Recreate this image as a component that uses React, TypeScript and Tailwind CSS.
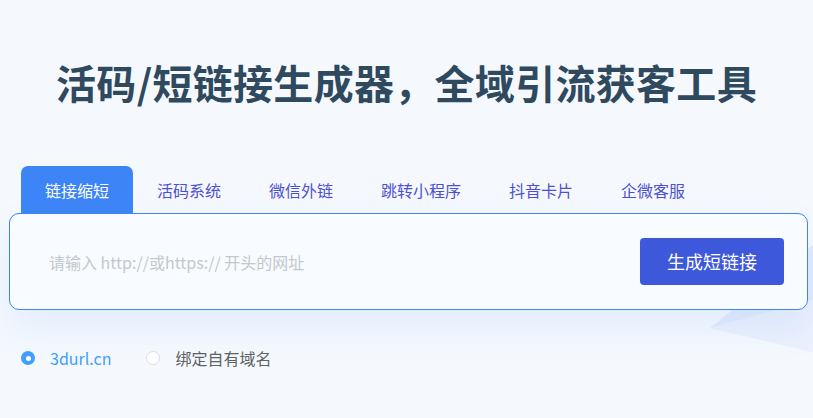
import React, { useState } from 'react';

const tabs = ['链接缩短', '活码系统', '微信外链', '跳转小程序', '抖音卡片', '企微客服'];

const App: React.FC = () => {
  const [active, setActive] = useState(0);
  const [domain, setDomain] = useState<'default' | 'own'>('default');

  return (
    <div
      className="relative w-[813px] h-[418px] overflow-hidden bg-[#f5f9fe]"
      style={{ fontFamily: '"Noto Sans CJK SC", "Noto Sans", sans-serif' }}
    >
      {/* decorative light shape, bottom right */}
      <svg className="absolute right-0 top-[240px] h-[120px] w-[103px]" viewBox="0 0 103 120" fill="none">
        <polygon points="0,88 103,5 103,112" fill="#e2ebfc" />
        <polygon points="0,88 103,60 103,112" fill="#ebf1fd" />
      </svg>

      <div className="relative flex flex-col">
        <h1 className="pt-[58px] text-center text-[40px] leading-[48px] font-bold text-[#2f4a5f] tracking-[0.3px]">
          活码/短链接生成器，全域引流获客工具
        </h1>

        <div className="mt-[60px] ml-[9px] mr-[5px]">
          <div className="flex pl-[12px]">
            {tabs.map((t, i) => (
              <button
                key={t}
                onClick={() => setActive(i)}
                className={`h-[48px] px-[24px] text-[16px] leading-[48px] rounded-t-[7px] ${
                  i === active ? 'bg-[#3d85f6] text-white' : 'text-[#4d50d6]'
                }`}
              >
                {t}
              </button>
            ))}
          </div>

          <div className="-mt-px flex h-[97px] items-center justify-between rounded-[10px] border border-[#3f86f5] bg-[#f8fbff] pl-[39px] pr-[23px] shadow-[0_18px_36px_rgba(64,128,240,0.10)]">
            <input
              className="flex-1 bg-transparent text-[16px] text-[#333] outline-none placeholder:text-[#c4c7cf]"
              placeholder="请输入 http://或https:// 开头的网址"
            />
            <button className="h-[47px] w-[144px] rounded-[4px] bg-[#3d58db] text-[18px] text-white">
              生成短链接
            </button>
          </div>
        </div>

        <div className="mt-[36px] flex items-center pl-[21px] text-[16px]">
          <label className="flex items-center cursor-pointer" onClick={() => setDomain('default')}>
            <span
              className={`flex h-[14px] w-[14px] items-center justify-center rounded-full ${
                domain === 'default' ? 'bg-[#409eff]' : 'border border-[#dcdfe6] bg-white'
              }`}
            >
              {domain === 'default' && <span className="h-[5px] w-[5px] rounded-full bg-white" />}
            </span>
            <span className={`ml-[15px] ${domain === 'default' ? 'text-[#409eff]' : 'text-[#606266]'}`}>3durl.cn</span>
          </label>
          <label className="ml-[35px] flex items-center cursor-pointer" onClick={() => setDomain('own')}>
            <span
              className={`flex h-[14px] w-[14px] items-center justify-center rounded-full ${
                domain === 'own' ? 'bg-[#409eff]' : 'border border-[#dcdfe6] bg-white'
              }`}
            >
              {domain === 'own' && <span className="h-[5px] w-[5px] rounded-full bg-white" />}
            </span>
            <span className={`ml-[15px] ${domain === 'own' ? 'text-[#409eff]' : 'text-[#606266]'}`}>绑定自有域名</span>
          </label>
        </div>
      </div>
    </div>
  );
};

export default App;
